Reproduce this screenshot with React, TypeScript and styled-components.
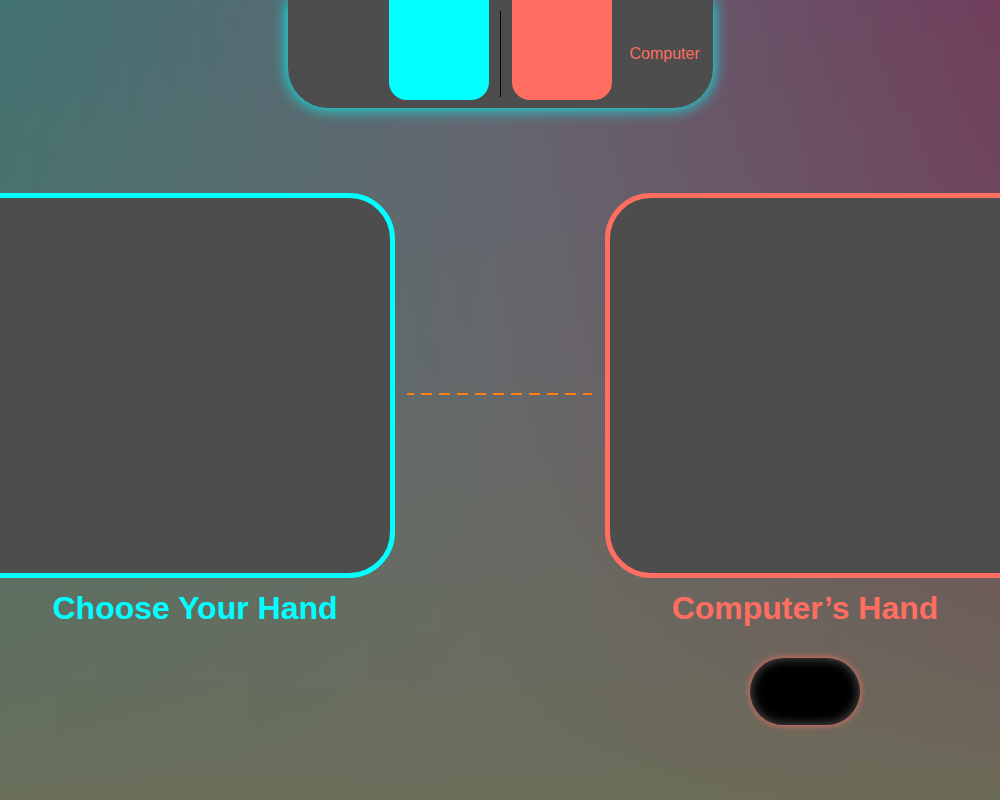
import styled, { createGlobalStyle } from "styled-components";

const CYAN = "#00ffff";
const CORAL = "#ff6e61";
const PANEL = "#4d4d4d";

const GlobalStyle = createGlobalStyle`
  html, body {
    margin: 0;
    height: 100%;
    overflow: hidden;
  }
  body {
    font-family: "Liberation Sans", Arial, sans-serif;
    background:
      linear-gradient(to bottom, rgba(108, 110, 88, 0) 0%, rgba(108, 110, 88, 0.3) 45%, rgba(108, 110, 88, 0.92) 100%),
      linear-gradient(to right, #427272 0%, #636573 50%, #703e5c 100%);
    background-attachment: fixed;
  }
`;

export default function App() {
  return (
    <>
      <GlobalStyle />
      <Page>
        <ScoreBoard>
          <span />
          <ScoreBlock $color={CYAN} />
          <Divider />
          <ScoreBlock $color={CORAL} />
          <PlayerTag>Computer</PlayerTag>
        </ScoreBoard>

        <Arena>
          <Side>
            <HandCard $color={CYAN} $side="left" />
            <HandLabel $color={CYAN}>Choose Your Hand</HandLabel>
          </Side>
          <Middle>
            <DashLine />
          </Middle>
          <Side>
            <HandCard $color={CORAL} $side="right" />
            <HandLabel $color={CORAL}>Computer’s Hand</HandLabel>
            <PlayButton aria-label="play" />
          </Side>
        </Arena>
      </Page>
    </>
  );
}

const Page = styled.main`
  width: 1000px;
  height: 800px;
  display: flex;
  flex-direction: column;
  align-items: center;
`;

const ScoreBoard = styled.header`
  width: 425px;
  height: 108px;
  box-sizing: border-box;
  background: ${PANEL};
  border-radius: 0 0 40px 40px;
  box-shadow: 0 0 16px ${CYAN};
  display: grid;
  grid-template-columns: 1fr 100px 1px 100px 1fr;
  column-gap: 11px;
  align-items: start;
`;

const ScoreBlock = styled.div<{ $color: string }>`
  height: 100px;
  background: ${(p) => p.$color};
  border-radius: 0 0 18px 18px;
`;

const Divider = styled.div`
  margin-top: 11px;
  height: 86px;
  background: #000;
`;

const PlayerTag = styled.span`
  align-self: center;
  padding-left: 7px;
  color: ${CORAL};
  font-size: 16px;
  line-height: 1;
`;

const Arena = styled.section`
  width: 100%;
  margin-top: 85px;
  padding-bottom: 20px;
  overflow: hidden;
  display: flex;
  justify-content: center;
  align-items: flex-start;
`;

const Side = styled.div`
  width: 400px;
  flex-shrink: 0;
  display: flex;
  flex-direction: column;
  align-items: center;
`;

const HandCard = styled.div<{ $color: string; $side: "left" | "right" }>`
  align-self: stretch;
  height: 385px;
  box-sizing: border-box;
  margin-left: ${(p) => (p.$side === "left" ? "-80px" : "0")};
  margin-right: ${(p) => (p.$side === "right" ? "-80px" : "0")};
  background: ${PANEL};
  border: 5px solid ${(p) => p.$color};
  border-radius: 46px;
`;

const HandLabel = styled.h2<{ $color: string }>`
  margin: 12px 0 0;
  color: ${(p) => p.$color};
  font-size: 32px;
  font-weight: 700;
  line-height: 37px;
`;

const Middle = styled.div`
  width: 210px;
  flex-shrink: 0;
  box-sizing: border-box;
  padding: 200px 13px 0 12px;
`;

const DashLine = styled.div`
  height: 2px;
  background: repeating-linear-gradient(to right, #ff7f11 0 11px, transparent 11px 18px);
  background-position: -4px 0;
`;

const PlayButton = styled.button`
  margin-top: 31px;
  width: 110px;
  height: 67px;
  border: none;
  border-radius: 34px;
  background: #000;
  box-shadow:
    inset 0 0 12px rgba(255, 255, 255, 0.35),
    0 0 7px ${CORAL};
  cursor: pointer;
`;
